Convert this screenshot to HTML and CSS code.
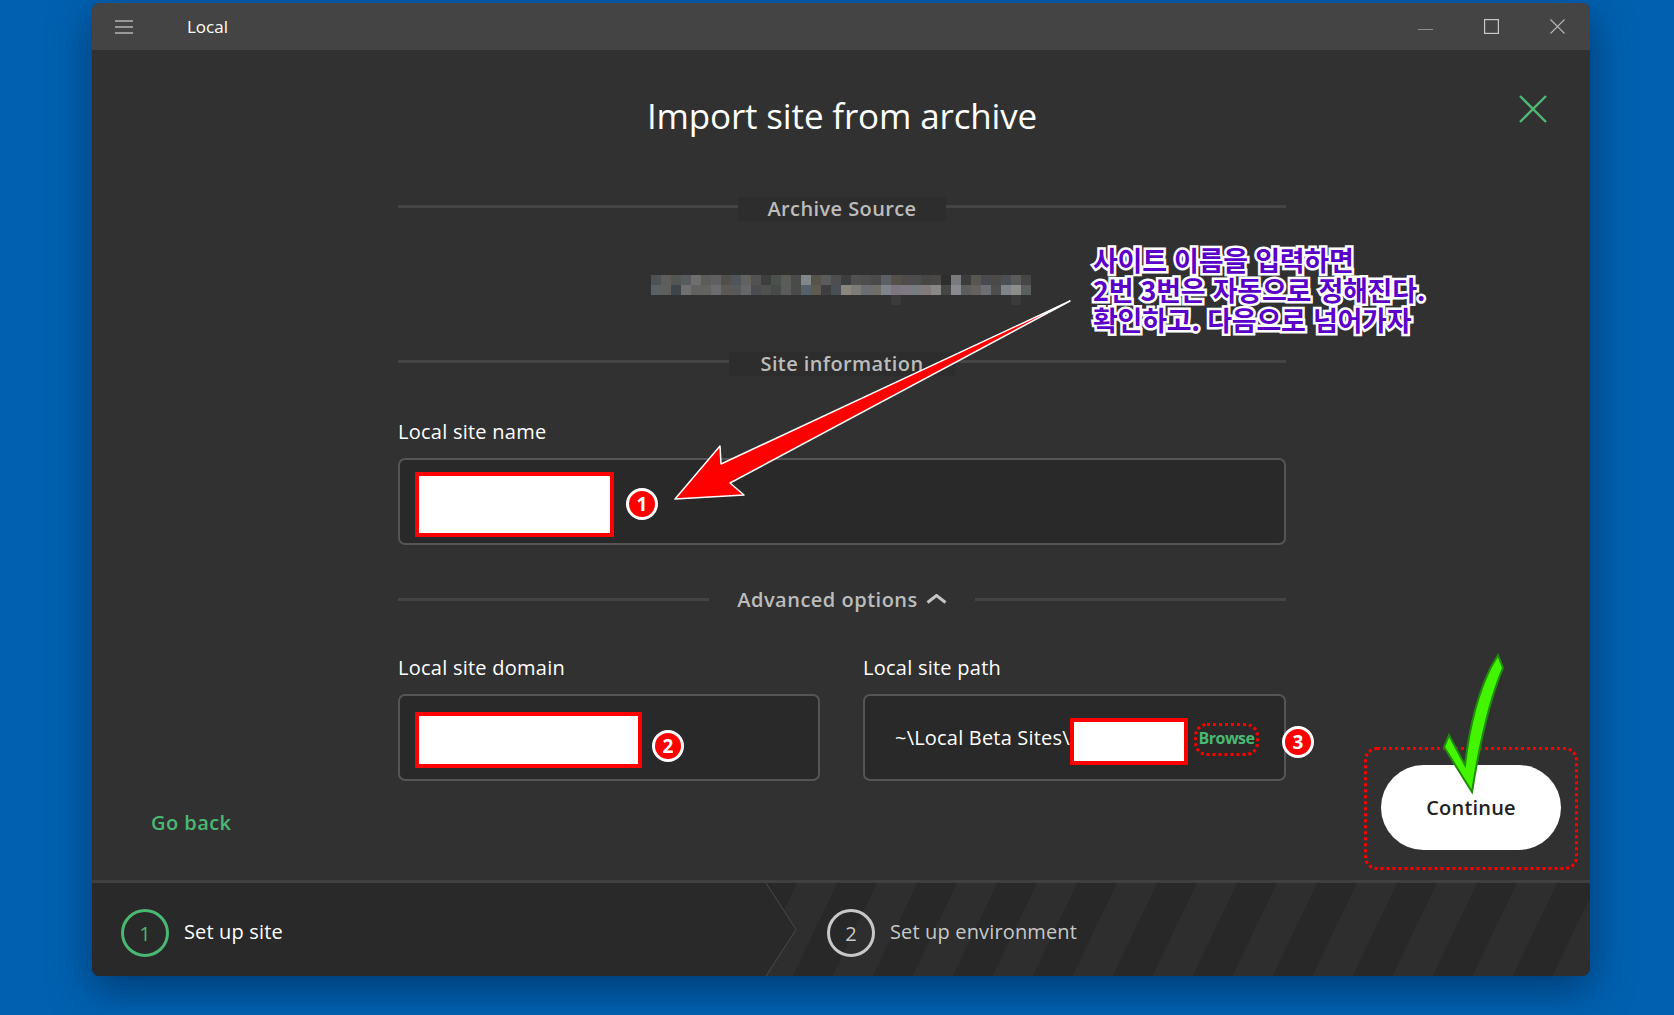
FILE: index.html
```html
<!DOCTYPE html>
<html lang="ko">
<head>
  <meta charset="UTF-8">
  <title>Local</title>
  <link rel="stylesheet" href="styles.css">
</head>
<body>
  <div class="window">
    <header class="titlebar">
      <svg class="menu-icon" width="18" height="14" viewBox="0 0 18 14">
        <path d="M0 1h18M0 7h18M0 13h18" stroke="#b5b5b5" stroke-width="1.4" fill="none"/>
      </svg>
      <span class="app-name">Local</span>
      <div class="win-controls">
        <svg width="15" height="15" viewBox="0 0 15 15"><path d="M0 10.5h15" stroke="#8f8f8f" stroke-width="1.2"/></svg>
        <svg width="15" height="15" viewBox="0 0 15 15"><rect x=".6" y=".6" width="13.8" height="13.8" fill="none" stroke="#c8c8c8" stroke-width="1.2"/></svg>
        <svg width="15" height="15" viewBox="0 0 15 15"><path d="M.5.5l14 14M14.500.5l-14 14" stroke="#b5b5b5" stroke-width="1.1"/></svg>
      </div>
    </header>

    <main class="content">
      <div class="side-left">
        <a class="go-back">Go back</a>
      </div>

      <div class="form">
        <h1 class="title">Import site from archive</h1>

        <div class="section archive-head">
          <span class="line"></span><span class="section-label label-archive">Archive Source</span><span class="line"></span>
        </div>

        <svg class="blurred" width="380" height="30" viewBox="0 0 38 3" shape-rendering="crispEdges">
          <rect x="0" y="0" width="1" height="1" fill="#4f5254"/><rect x="1" y="0" width="1" height="1" fill="#5f5e5c"/><rect x="2" y="0" width="1" height="1" fill="#545654"/><rect x="3" y="0" width="1" height="1" fill="#575b5e"/><rect x="4" y="0" width="1" height="1" fill="#706e6c"/><rect x="5" y="0" width="1" height="1" fill="#5c5c5a"/><rect x="6" y="0" width="1" height="1" fill="#606060"/><rect x="7" y="0" width="1" height="1" fill="#504f4c"/><rect x="8" y="0" width="1" height="1" fill="#50555a"/><rect x="9" y="0" width="1" height="1" fill="#626260"/>
          <rect x="10" y="0" width="1" height="1" fill="#525252"/><rect x="11" y="0" width="1" height="1" fill="#3e3e3e"/><rect x="12" y="0" width="1" height="1" fill="#4a504c"/><rect x="13" y="0" width="1" height="1" fill="#5a5c58"/><rect x="14" y="0" width="1" height="1" fill="#4a4a4a"/><rect x="15" y="0" width="1" height="1" fill="#80868a"/><rect x="16" y="0" width="1" height="1" fill="#56544a"/><rect x="17" y="0" width="1" height="1" fill="#5a5c5c"/><rect x="18" y="0" width="1" height="1" fill="#4e4e4e"/><rect x="19" y="0" width="1" height="1" fill="#3c3e40"/>
          <rect x="20" y="0" width="1" height="1" fill="#505050"/><rect x="21" y="0" width="1" height="1" fill="#4e4e4e"/><rect x="22" y="0" width="1" height="1" fill="#4a4a4a"/><rect x="23" y="0" width="1" height="1" fill="#5c6064"/><rect x="24" y="0" width="1" height="1" fill="#54504a"/><rect x="25" y="0" width="1" height="1" fill="#4e4c4a"/><rect x="26" y="0" width="1" height="1" fill="#4c4c4c"/><rect x="27" y="0" width="1" height="1" fill="#484644"/><rect x="28" y="0" width="1" height="1" fill="#4a4846"/><rect x="29" y="0" width="1" height="1" fill="#2e2e2e"/>
          <rect x="30" y="0" width="1" height="1" fill="#787a7c"/><rect x="31" y="0" width="1" height="1" fill="#3c3c3c"/><rect x="32" y="0" width="1" height="1" fill="#585650"/><rect x="33" y="0" width="1" height="1" fill="#484a50"/><rect x="34" y="0" width="1" height="1" fill="#4c4a48"/><rect x="35" y="0" width="1" height="1" fill="#4c5054"/><rect x="36" y="0" width="1" height="1" fill="#5a5a5a"/><rect x="37" y="0" width="1" height="1" fill="#464646"/>
          <rect x="0" y="1" width="1" height="1" fill="#5a6064"/><rect x="1" y="1" width="1" height="1" fill="#5e5e5c"/><rect x="2" y="1" width="1" height="1" fill="#3e4448"/><rect x="3" y="1" width="1" height="1" fill="#707070"/><rect x="4" y="1" width="1" height="1" fill="#626260"/><rect x="5" y="1" width="1" height="1" fill="#626260"/><rect x="6" y="1" width="1" height="1" fill="#6c6c70"/><rect x="7" y="1" width="1" height="1" fill="#5c5856"/><rect x="8" y="1" width="1" height="1" fill="#585a5a"/><rect x="9" y="1" width="1" height="1" fill="#646668"/>
          <rect x="10" y="1" width="1" height="1" fill="#4a4c50"/><rect x="11" y="1" width="1" height="1" fill="#505050"/><rect x="12" y="1" width="1" height="1" fill="#484a4a"/><rect x="13" y="1" width="1" height="1" fill="#5a5c5c"/><rect x="14" y="1" width="1" height="1" fill="#4a4a48"/><rect x="15" y="1" width="1" height="1" fill="#56606a"/><rect x="16" y="1" width="1" height="1" fill="#5e5a50"/><rect x="17" y="1" width="1" height="1" fill="#3e3e3e"/><rect x="18" y="1" width="1" height="1" fill="#4a4e56"/><rect x="19" y="1" width="1" height="1" fill="#8a8680"/>
          <rect x="20" y="1" width="1" height="1" fill="#7e7c78"/><rect x="21" y="1" width="1" height="1" fill="#6a6e72"/><rect x="22" y="1" width="1" height="1" fill="#706e68"/><rect x="23" y="1" width="1" height="1" fill="#80848a"/><rect x="24" y="1" width="1" height="1" fill="#7c7680"/><rect x="25" y="1" width="1" height="1" fill="#807880"/><rect x="26" y="1" width="1" height="1" fill="#787c80"/><rect x="27" y="1" width="1" height="1" fill="#807a7a"/><rect x="28" y="1" width="1" height="1" fill="#888884"/><rect x="29" y="1" width="1" height="1" fill="#464646"/>
          <rect x="30" y="1" width="1" height="1" fill="#888a90"/><rect x="31" y="1" width="1" height="1" fill="#5c5e5c"/><rect x="32" y="1" width="1" height="1" fill="#646260"/><rect x="33" y="1" width="1" height="1" fill="#6c6e74"/><rect x="34" y="1" width="1" height="1" fill="#4e4e4e"/><rect x="35" y="1" width="1" height="1" fill="#7e8488"/><rect x="36" y="1" width="1" height="1" fill="#8c8e8c"/><rect x="37" y="1" width="1" height="1" fill="#5a5e5e"/>
          <rect x="24" y="2" width="1" height="1" fill="#3a3a3a"/><rect x="36" y="2" width="1" height="1" fill="#3a3a3a"/>
        </svg>

        <div class="section site-head">
          <span class="line"></span><span class="section-label label-site">Site information</span><span class="line"></span>
        </div>

        <label class="field-label name-label">Local site name</label>
        <div class="input name-input">
          <div class="redact redact-name"></div>
          <span class="badge badge-name">1</span>
        </div>

        <div class="section adv-head">
          <span class="line"></span>
          <span class="adv-label">Advanced options
            <svg width="21" height="10" viewBox="0 0 21 10"><path d="M1.500 8.500L10.500 1.500l9 7" fill="none" stroke="#c4c4c4" stroke-width="3"/></svg>
          </span>
          <span class="line"></span>
        </div>

        <div class="two-col">
          <div>
            <label class="field-label">Local site domain</label>
            <div class="input domain-input">
              <div class="redact redact-domain"></div>
              <span class="badge badge-domain">2</span>
            </div>
          </div>
          <div>
            <label class="field-label">Local site path</label>
            <div class="input path-input">
              <span class="path-text">~\Local Beta Sites\</span>
              <div class="redact redact-path"></div>
              <a class="browse">Browse</a>
              <span class="badge badge-path">3</span>
            </div>
          </div>
        </div>
      </div>

      <div class="side-right">
        <svg class="close-x" width="28" height="28" viewBox="0 0 28 28">
          <path d="M1 1l26 26M27 1L1 27" stroke="#4fb875" stroke-width="2.400" fill="none"/>
        </svg>
        <div class="continue-ring">
          <button class="continue">Continue</button>
        </div>
      </div>
    </main>

    <footer class="steps">
      <div class="step step-active">
        <span class="step-num">1</span>
        <span>Set up site</span>
        <svg class="step-arrow" width="32" height="93" viewBox="0 0 32 93">
          <path d="M0 0L30 46.500 0 93V0z" fill="#282928"/>
          <path d="M0 0L30 46.500 0 93" fill="none" stroke="#4a4a4a" stroke-width="1"/>
        </svg>
      </div>
      <div class="step step-next">
        <span class="step-num">2</span>
        <span>Set up environment</span>
      </div>
    </footer>
  </div>

  <!-- annotations drawn on top of the screenshot -->
  <p class="note">사이트 이름을 입력하면<br>2번 3번은 자동으로 정해진다.<br>확인하고. 다음으로 넘어가자</p>
  <svg class="marks" width="1674" height="1015" viewBox="0 0 1674 1015">
    <path d="M1070 301L721 464 720 446 675 499 744 495 730 483z" fill="#ff0000" stroke="#fff" stroke-width="1.500" stroke-linejoin="round"/>
    <path d="M1498 655L1503 668Q1485 710 1472 792L1444 747 1449 735 1465 765Q1472 705 1491 667z" fill="#44f500" stroke="#1f8a0c" stroke-width="2"/>
  </svg>
</body>
</html>
```

FILE: styles.css
```css
* {
  padding: 0;
  margin: 0;
  box-sizing: border-box;
}

body {
  position: relative;
  width: 1674px;
  height: 1015px;
  overflow: hidden;
  background: #0161b0;
  font-family: "Open Sans", "Liberation Sans", sans-serif;
  color: #fff;
}

.window {
  width: 1498px;
  height: 973px;
  margin: 3px 0 0 92px;
  display: flex;
  flex-direction: column;
  border-radius: 8px;
  overflow: hidden;
  background: #313131;
  box-shadow: 0 12px 40px rgba(0, 25, 60, .55);
}

.titlebar {
  height: 47px;
  flex: none;
  display: flex;
  align-items: center;
  padding: 0 25px 0 23px;
  background: #444;
}

.menu-icon {
  margin-top: 1px;
}

.app-name {
  margin-left: 54px;
  font-size: 17px;
}

.win-controls {
  margin-left: auto;
  display: flex;
  gap: 51px;
}

.content {
  flex: 1;
  display: grid;
  grid-template-columns: 306px 888px 304px;
}

.side-left {
  display: flex;
  align-items: flex-end;
  padding: 0 0 44px 59px;
}

.go-back {
  font-size: 20px;
  font-weight: 600;
  color: #4ab872;
  letter-spacing: .45px;
}

.title {
  margin-top: 46px;
  font-size: 35px;
  line-height: 40px;
  font-weight: 400;
  text-align: center;
  letter-spacing: -.15px;
}

.section {
  display: flex;
  align-items: center;
  height: 24px;
}

.line {
  flex: 1;
  height: 3px;
  margin-bottom: 6px;
  background: #444;
}

.section-label {
  height: 24px;
  line-height: 24px;
  font-size: 20px;
  font-weight: 600;
  color: #bcbcbc;
  background: #2d2d2d;
  letter-spacing: .4px;
}

.label-archive {
  padding: 0 29px;
}

.label-site {
  padding: 0 31px;
}

.archive-head {
  margin-top: 61px;
}

.blurred {
  display: block;
  margin: 54px 0 0 253px;
}

.site-head {
  margin-top: 47px;
}

.field-label {
  display: block;
  height: 24px;
  line-height: 24px;
  margin-bottom: 14px;
  font-size: 20px;
  font-weight: 500;
  letter-spacing: .25px;
}

.name-label {
  margin-top: 44px;
}

.input {
  position: relative;
  height: 87px;
  display: flex;
  align-items: flex-start;
  padding: 12px 15px;
  border: 2px solid #555;
  border-radius: 7px;
  background: #282928;
}

.redact {
  flex: none;
  border: 4px solid #f00;
  background: #fff;
}

.redact-name {
  width: 199px;
  height: 65px;
}

.redact-domain {
  width: 227px;
  height: 56px;
  margin-top: 4px;
}

.redact-path {
  width: 118px;
  height: 47px;
  margin-top: 10px;
}

.badge {
  flex: none;
  width: 32px;
  height: 32px;
  border: 3px solid #fff;
  border-radius: 50%;
  background: #f00;
  color: #fff;
  font-size: 19px;
  font-weight: 700;
  line-height: 26px;
  text-align: center;
}

.badge-name {
  margin: 16px 0 0 12px;
}

.badge-domain {
  margin: 22px 0 0 10px;
}

.badge-path {
  position: absolute;
  right: -30px;
  top: 30px;
}

.adv-head {
  margin-top: 42px;
}

.adv-head .line {
  margin-bottom: 0;
}

.adv-label {
  display: flex;
  align-items: center;
  gap: 8px;
  padding: 0 28px;
  font-size: 20px;
  font-weight: 600;
  color: #bcbcbc;
  letter-spacing: .5px;
}

.two-col {
  display: grid;
  grid-template-columns: 422px 423px;
  gap: 43px;
  margin-top: 45px;
}

.path-text {
  flex: none;
  width: 190px;
  margin-top: 16px;
  padding-left: 15px;
  font-size: 20px;
  font-weight: 500;
  white-space: nowrap;
  letter-spacing: .2px;
}

.browse {
  flex: none;
  width: 65px;
  height: 33px;
  margin: 15px 0 0 6px;
  border: 3px dotted #f00;
  border-radius: 13px;
  color: #4ab872;
  font-size: 16px;
  font-weight: 700;
  line-height: 25px;
  text-align: center;
  letter-spacing: -.5px;
}

.side-right {
  display: flex;
  flex-direction: column;
  align-items: flex-end;
  justify-content: space-between;
  padding: 45px 12px 10px 0;
}

.close-x {
  margin-right: 31px;
}

.continue-ring {
  width: 214px;
  height: 123px;
  padding: 15px 14px;
  border: 3px dotted #f00;
  border-radius: 13px;
}

.continue {
  display: block;
  width: 180px;
  height: 85px;
  border: 0;
  border-radius: 43px;
  background: #fff;
  color: #222;
  font: 600 20px "Open Sans", "Liberation Sans", sans-serif;
  letter-spacing: .2px;
}

.steps {
  height: 96px;
  flex: none;
  display: flex;
  border-top: 3px solid #404040;
  background: repeating-linear-gradient(115.5deg, #2d2e2d 0 22.6px, #272827 22.6px 58.7px, #2d2e2d 58.7px 72.2px);
}

.step {
  display: flex;
  align-items: center;
  gap: 15px;
  padding-top: 3px;
  font-size: 20px;
  font-weight: 500;
  letter-spacing: .15px;
}

.step-active {
  position: relative;
  width: 674px;
  padding-left: 29px;
  background: #282928;
}

.step-next {
  padding-left: 61px;
  color: #c8c8c8;
}

.step-arrow {
  position: absolute;
  left: 100%;
  top: 0;
}

.step-num {
  width: 48px;
  height: 48px;
  margin-top: 4px;
  border: 3px solid #c8c8c8;
  border-radius: 50%;
  font-size: 20px;
  font-weight: 400;
  line-height: 44px;
  text-align: center;
}

.step-active .step-num {
  border-color: #4ab872;
  color: #4ab872;
}

.note {
  position: absolute;
  left: 1093px;
  top: 245px;
  font: 700 27px/30px "Noto Sans CJK KR", sans-serif;
  letter-spacing: -.25px;
  color: #5a00c8;
  -webkit-text-stroke: 5px #fff;
  paint-order: stroke fill;
  white-space: nowrap;
}

.marks {
  position: absolute;
  left: 0;
  top: 0;
  pointer-events: none;
}
```
